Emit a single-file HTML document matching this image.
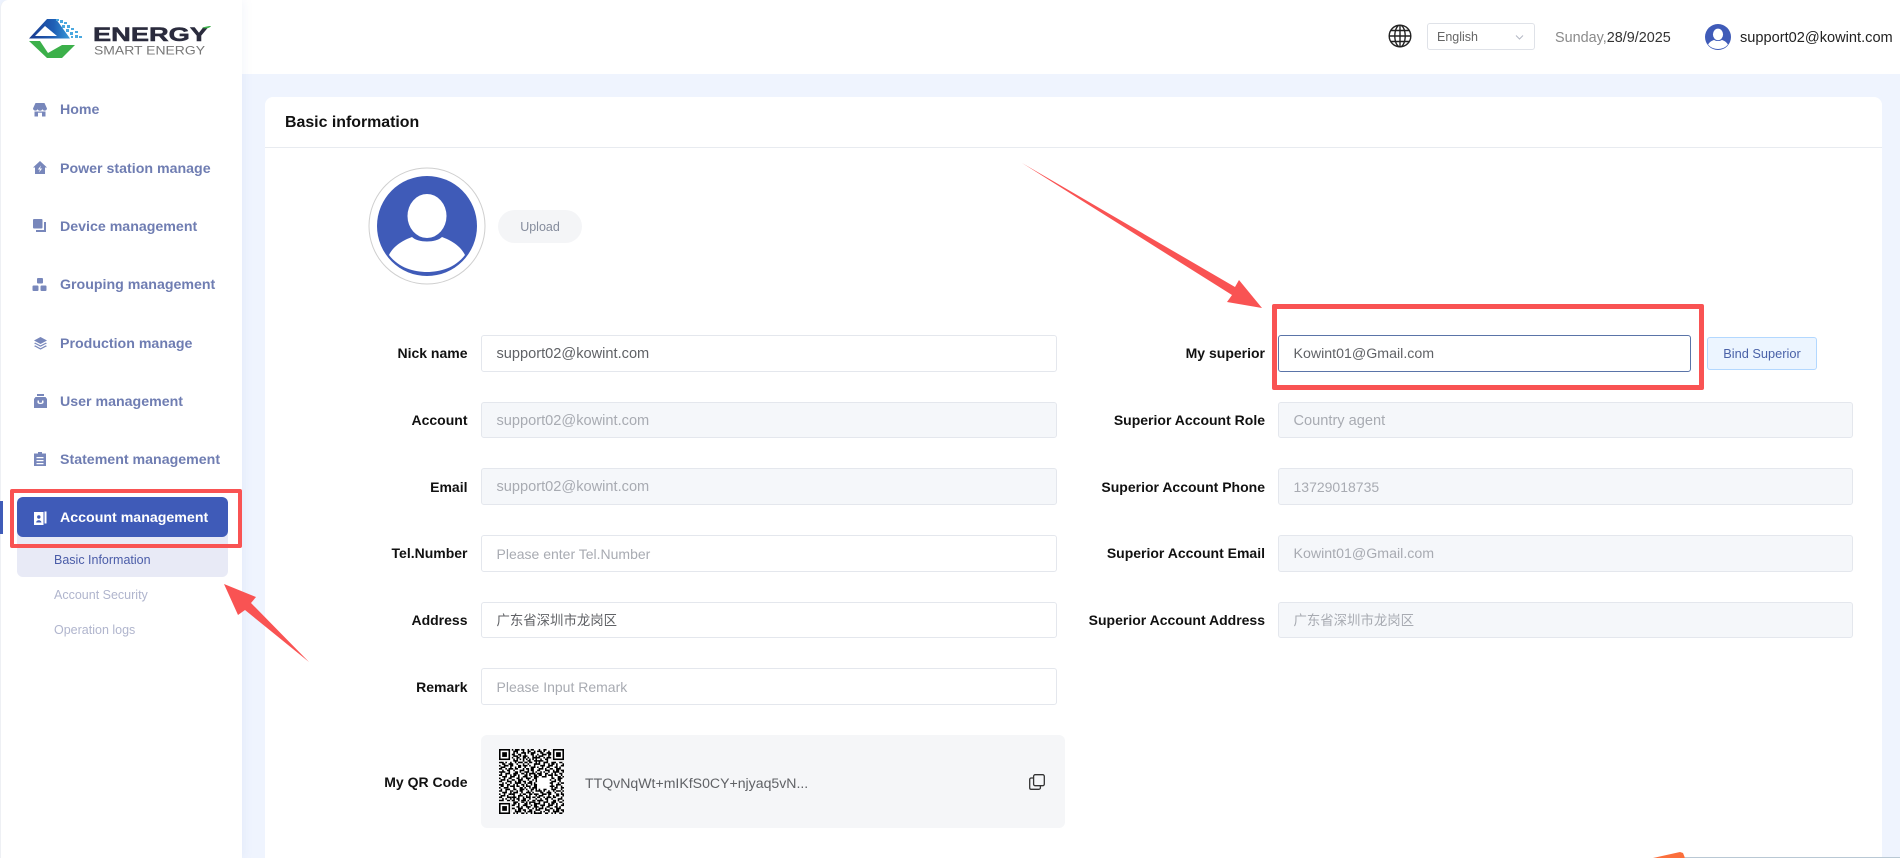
<!DOCTYPE html>
<html lang="en"><head><meta charset="utf-8"><title>Basic information</title>
<style>
*{box-sizing:border-box}
html,body{margin:0;padding:0}
body{width:1900px;height:858px;overflow:hidden;position:relative;background:#eff4fe;font-family:"Liberation Sans","Noto Sans CJK SC",sans-serif;color:#606266}
.a{position:absolute}
.side{left:0;top:0;width:242px;height:858px;background:#fff;border-left:1px solid #eef0f4;border-top-left-radius:8px;box-shadow:2px 0 10px rgba(120,140,200,.08)}
.head{left:242px;top:0;width:1658px;height:74px;background:#fff}
.panel{left:265px;top:97px;width:1617px;height:761px;background:#fff;border-radius:8px 8px 0 0}
.nav{left:60px;font-size:14.2px;font-weight:700;color:#6f7db2;line-height:18px;white-space:nowrap}
.sub{left:54px;font-size:12.5px;line-height:16px;color:#b0b5cd;white-space:nowrap}
.ic{fill:#7887bb}
.lb{font-size:14px;font-weight:700;color:#111;text-align:right;line-height:18px;white-space:nowrap}
.l1{left:300px;width:167.5px}
.l2{left:1000px;width:265px}
.in{height:37px;border:1px solid #e4e7ed;border-radius:3px;background:#fff;font-size:14.6px;line-height:37px;padding-left:14.5px;white-space:nowrap;color:#606266}
.c1{left:481px;width:576px}
.c2{left:1278px;width:575px}
.dis{background:#f5f7fa;color:#a8abb2}
.ph{color:#a8abb2;font-size:14px}
.zh{font-size:13.4px}
</style></head><body>
<div class="a head"></div>
<div class="a side"></div>

<!-- logo -->
<svg class="a" style="left:24px;top:14px" width="196" height="50" viewBox="24 14 196 50">
<defs><linearGradient id="rg" x1="0" x2="1" y1="0" y2="0"><stop offset="0" stop-color="#1a3a8e"/><stop offset=".6" stop-color="#1f5fb5"/><stop offset="1" stop-color="#3a9ad8"/></linearGradient></defs>
<path d="M29 38.5L47 19H56L70 38.5ZM35 36H57L45 26Z" fill="url(#rg)" fill-rule="evenodd"/>
<g fill="#4aa8e0"><rect x="56" y="19" width="3" height="2"/><rect x="60" y="20" width="3" height="3"/><rect x="64" y="22" width="3" height="2"/><rect x="62" y="25" width="3" height="3"/><rect x="67" y="25" width="3" height="3"/><rect x="71" y="28" width="3" height="2"/><rect x="66" y="29" width="3" height="3"/><rect x="70" y="32" width="3" height="3"/><rect x="75" y="31" width="3" height="2"/><rect x="75" y="35" width="3" height="3"/><rect x="79" y="36" width="3" height="2"/><rect x="71" y="36" width="2" height="2"/></g>
<path d="M29 41H40L48 53L62 45H75L62 58H47Z" fill="#3cb04a"/>
<text x="93" y="41" font-family="Liberation Sans" font-weight="700" font-size="19.5" fill="#2a2b3d" stroke="#2a2b3d" stroke-width=".5" textLength="115" lengthAdjust="spacingAndGlyphs">ENERGY</text>
<path d="M202 28c2-1 6-2 9-2-1 2-5 3-9 2z" fill="#3cb04a"/>
<text x="94" y="54.5" font-family="Liberation Sans" font-size="12" fill="#777" textLength="111" lengthAdjust="spacingAndGlyphs">SMART ENERGY</text>
</svg>

<!-- nav icons -->
<svg class="a" style="left:0;top:0" width="60" height="540" viewBox="0 0 60 540">
<g class="ic">
<path d="M35.5 103H44.5L47 108.5a2.4 2.4 0 0 1-4.6.6 2.6 2.6 0 0 1-4.8 0 2.4 2.4 0 0 1-4.6-.6Z"/>
<path d="M34.5 111.5H45.5V116.5H42V112.8H38V116.5H34.5Z"/>
<path d="M40 161L47 167.5H45V174H35V167.5H33ZM41 165.5L37.8 169.5H40L39 172.5L42.2 168.5H40Z" fill-rule="evenodd"/>
<rect x="33" y="219" width="9.5" height="9.5" rx="1"/>
<path d="M44 222H46V232H36V230H44Z"/>
<rect x="37" y="278" width="6" height="5.5" rx="1"/><rect x="32.5" y="285.5" width="6" height="5.5" rx="1"/><rect x="40.5" y="285.5" width="6" height="5.5" rx="1"/>
<path d="M40.5 337L47 340.5 40.5 344 34 340.5Z"/>
<path d="M35.2 342.6L40.5 345.4 45.8 342.6 47 343.3 40.5 346.8 34 343.3Z"/>
<path d="M35.2 345.4L40.5 348.2 45.8 345.4 47 346.1 40.5 349.6 34 346.1Z"/>
<path d="M37 394H44V396H37Z"/>
<path d="M35.5 397H45.5L47 399V408H34V399ZM37.5 400.5V402.5C37.5 404.5 43.5 404.5 43.5 402.5V400.5H42V402C42 403 39 403 39 402V400.5Z" fill-rule="evenodd"/>
<path d="M38 452H42V453.5H46V466H34V453.5H38ZM36.5 457V458.2H43.5V457ZM36.5 460V461.2H43.5V460ZM36.5 463V464.2H43.5V463Z" fill-rule="evenodd"/>
</g>
</svg>

<div class="a nav" style="top:101px">Home</div>
<div class="a nav" style="top:160px">Power station manage</div>
<div class="a nav" style="top:218px">Device management</div>
<div class="a nav" style="top:276px">Grouping management</div>
<div class="a nav" style="top:335px">Production manage</div>
<div class="a nav" style="top:393px">User management</div>
<div class="a nav" style="top:451px">Statement management</div>

<!-- active item -->
<div class="a" style="left:17px;top:525px;width:211px;height:52px;background:#e8eaf6;border-radius:0 0 6px 6px"></div>
<div class="a" style="left:0;top:501px;width:3px;height:33px;background:#3f5bb8"></div>
<div class="a" style="left:17px;top:497px;width:211px;height:40px;background:#3f5bb8;border-radius:6px"></div>
<svg class="a" style="left:34px;top:510px" width="13" height="16" viewBox="0 0 13 16"><path d="M0 2H9.5V15H0Z" fill="#fff"/><path d="M10.5 1.5H12.5V13.5H10.5Z" fill="#fff"/><circle cx="4.8" cy="7" r="1.7" fill="#3f5bb8"/><path d="M2.2 12.5c0-3 5.2-3 5.2 0Z" fill="#3f5bb8"/></svg>
<div class="a nav" style="top:509px;color:#fff">Account management</div>
<div class="a sub" style="top:552px;color:#4a5ca8">Basic Information</div>
<div class="a sub" style="top:587px">Account Security</div>
<div class="a sub" style="top:622px">Operation logs</div>

<!-- header right -->
<svg class="a" style="left:1388px;top:24px" width="24" height="24" viewBox="0 0 24 24" fill="none" stroke="#222" stroke-width="1.4"><circle cx="12" cy="12" r="10.8"/><ellipse cx="12" cy="12" rx="5.2" ry="10.8"/><path d="M12 1.2V22.8M1.2 12H22.8M3 6.5H21M3 17.5H21"/></svg>
<div class="a" style="left:1427px;top:23px;width:108px;height:27px;border:1px solid #dfe2e8;border-radius:3px;background:#fff;font-size:12.5px;line-height:27px;padding-left:9px;color:#666">English</div>
<svg class="a" style="left:1515px;top:34px" width="9" height="7" viewBox="0 0 9 7" fill="none" stroke="#b4b8c4" stroke-width="1"><path d="M1 1.5L4.5 5 8 1.5"/></svg>
<div class="a" style="left:1555px;top:29px;font-size:14.4px;line-height:18px;color:#8a8a8a;white-space:nowrap">Sunday,<span style="color:#333">28/9/2025</span></div>
<svg class="a" style="left:1705px;top:24px" width="26" height="26" viewBox="9 9 100 100">
<circle cx="59" cy="59" r="50" fill="#3f5bb8"/><ellipse cx="59" cy="49" rx="19.5" ry="22" fill="#fff"/><path d="M21 88C26 78 36 73 44 70 50 76 68 76 74 70 82 73 92 78 97 88 87 101 72 105 59 105 46 105 31 101 21 88Z" fill="#fff"/>
</svg>
<div class="a" style="left:1740px;top:28.5px;font-size:14.6px;line-height:18px;color:#222;white-space:nowrap">support02@kowint.com</div>

<!-- panel -->
<div class="a panel"></div>
<div class="a" style="left:285px;top:113px;font-size:15.9px;font-weight:700;color:#111;line-height:20px;white-space:nowrap">Basic information</div>
<div class="a" style="left:265px;top:147px;width:1617px;height:1px;background:#e8ebf0"></div>

<!-- avatar -->
<svg class="a" style="left:368px;top:167px" width="118" height="118" viewBox="0 0 118 118">
<circle cx="59" cy="59" r="58" fill="#fff" stroke="#cfcfcf" stroke-width="1"/>
<circle cx="59" cy="59" r="50" fill="#3f5bb8"/>
<ellipse cx="59" cy="49" rx="19.5" ry="22" fill="#fff"/>
<path d="M21 88C26 78 36 73 44 70 50 76 68 76 74 70 82 73 92 78 97 88 87 101 72 105 59 105 46 105 31 101 21 88Z" fill="#fff"/>
</svg>
<div class="a" style="left:498px;top:210px;width:84px;height:33px;border-radius:17px;background:#f4f5f7;color:#858c9c;font-size:12.5px;line-height:35px;text-align:center">Upload</div>

<!-- left form -->
<div class="a lb l1" style="top:344px">Nick name</div>
<div class="a in c1" style="top:335px">support02@kowint.com</div>
<div class="a lb l1" style="top:411px">Account</div>
<div class="a in c1 dis" style="top:402px;height:36px;line-height:36px">support02@kowint.com</div>
<div class="a lb l1" style="top:478px">Email</div>
<div class="a in c1 dis" style="top:468px">support02@kowint.com</div>
<div class="a lb l1" style="top:544px">Tel.Number</div>
<div class="a in c1 ph" style="top:535px">Please enter Tel.Number</div>
<div class="a lb l1" style="top:611px">Address</div>
<div class="a in c1 zh" style="top:602px;height:36px;line-height:35px">广东省深圳市龙岗区</div>
<div class="a lb l1" style="top:678px">Remark</div>
<div class="a in c1 ph" style="top:668px">Please Input Remark</div>

<!-- right form -->
<div class="a lb l2" style="top:344px">My superior</div>
<div class="a in" style="left:1278px;top:335px;width:413px;border-color:#5a74a8;border-radius:3px;font-size:14.2px">Kowint01@Gmail.com</div>
<div class="a" style="left:1707px;top:337px;width:110px;height:33px;background:#ecf5ff;border:1px solid #b3d8ff;border-radius:3px;color:#4a62a8;font-size:12.8px;line-height:31px;text-align:center;white-space:nowrap">Bind Superior</div>
<div class="a lb l2" style="top:411px">Superior Account Role</div>
<div class="a in c2 dis" style="top:402px;height:36px;line-height:36px">Country agent</div>
<div class="a lb l2" style="top:478px">Superior Account Phone</div>
<div class="a in c2 dis" style="top:468px;font-size:14px">13729018735</div>
<div class="a lb l2" style="top:544px">Superior Account Email</div>
<div class="a in c2 dis" style="top:535px;font-size:14.2px">Kowint01@Gmail.com</div>
<div class="a lb l2" style="top:611px">Superior Account Address</div>
<div class="a in c2 dis zh" style="top:602px;height:36px;line-height:35px">广东省深圳市龙岗区</div>

<!-- QR -->
<div class="a lb l1" style="top:773px">My QR Code</div>
<div class="a" style="left:481px;top:735px;width:584px;height:93px;background:#f5f6f8;border-radius:6px"></div>
<svg class="a" style="left:499px;top:749px" width="65" height="65" viewBox="0 0 41 41">
<defs>
<path id="q" stroke="#000" stroke-width="1" fill="none" d="M0 .5h2m1 0h3m2 0h1m1 0h3m1 0h2m2 0h1m1 0h2m2 0h3M2 1.5h1m2 0h2m2 0h3m3 0h1m2 0h2m2 0h1m2 0h2m2 0h2M9 2.5h1m1 0h1m2 0h3m1 0h1m1 0h3m1 0h1M8 3.5h2m2 0h2m2 0h1m3 0h2m2 0h2M9 4.5h3m1 0h1m1 0h3m3 0h1m1 0h1M8 5.5h1m2 0h2m2 0h2m1 0h1m2 0h3M9 6.5h1m1 0h1m1 0h1m1 0h1m1 0h1m1 0h1m1 0h1m1 0h1M1 7.5h1m2 0h2m3 0h3m3 0h1m2 0h2m2 0h2m2 0h2m2 0h1M0 8.5h3m1 0h1m2 0h1m2 0h1m1 0h3m1 0h2m1 0h2m2 0h1m1 0h2m1 0h2M2 9.5h2m2 0h3m2 0h1m3 0h1m2 0h1m3 0h3m1 0h3M0 10.5h1m2 0h3m1 0h2m3 0h2m1 0h3m1 0h1m2 0h1m2 0h1m2 0h2M1 11.5h3m3 0h1m2 0h1m1 0h2m2 0h1m3 0h3m1 0h1m1 0h3M0 12.5h2m2 0h1m1 0h3m1 0h2m3 0h1m1 0h2m1 0h2m3 0h2m1 0h1M2 13.5h1m2 0h2m2 0h1m3 0h3m2 0h1m1 0h2m2 0h3m2 0h1M0 14.5h4m2 0h1m3 0h2m1 0h1m2 0h3m2 0h1m1 0h1m2 0h3M1 15.5h1m2 0h3m2 0h3m2 0h2m1 0h1m1 0h4m3 0h2M0 16.5h2m2 0h1m2 0h1m1 0h2m1 0h1m3 0h2m1 0h1m2 0h2m1 0h3M2 17.5h3m2 0h3m2 0h1m2 0h3m2 0h1m1 0h2m1 0h1m2 0h1M0 18.5h1m2 0h1m2 0h2m3 0h2m1 0h1m2 0h3m2 0h3m1 0h2M1 19.5h3m1 0h1m2 0h2m2 0h3m3 0h1m2 0h1m1 0h1m2 0h2M0 20.5h2m3 0h3m2 0h1m1 0h2m1 0h2m2 0h2m2 0h3m1 0h1M2 21.5h1m1 0h1m2 0h1m2 0h4m2 0h1m1 0h3m1 0h1m3 0h2M0 22.5h3m2 0h2m2 0h1m1 0h1m2 0h2m1 0h1m2 0h1m1 0h3m1 0h2M1 23.5h2m2 0h1m1 0h3m1 0h2m2 0h1m1 0h3m2 0h2m2 0h3M0 24.5h1m2 0h3m3 0h1m3 0h2m1 0h1m2 0h1m1 0h3m1 0h2M9 25.5h2m2 0h3m1 0h1m2 0h2m1 0h2m1 0h1m2 0h2M8 26.5h1m2 0h1m1 0h2m3 0h1m1 0h1m2 0h3m1 0h2M9 27.5h3m2 0h1m2 0h3m1 0h1m2 0h1m1 0h3M8 28.5h2m3 0h1m1 0h2m2 0h2m1 0h3m2 0h2M9 29.5h1m2 0h3m2 0h1m1 0h1m3 0h2m1 0h3M8 30.5h3m1 0h1m2 0h1m1 0h3m1 0h2m2 0h3M9 31.5h1m1 0h2m2 0h2m2 0h1m3 0h1m1 0h2m1 0h1M8 32.5h2m2 0h1m1 0h3m1 0h1m2 0h2m1 0h2m2 0h1"/>
<clipPath id="c1"><rect x="0" y="0" width="24" height="33"/></clipPath>
<clipPath id="c2"><rect x="24" y="0" width="17" height="25"/></clipPath>
<clipPath id="c3"><rect x="24" y="25" width="17" height="16"/></clipPath>
<clipPath id="c4"><rect x="0" y="33" width="24" height="8"/></clipPath>
<clipPath id="c5"><rect x="0" y="25" width="8" height="8"/></clipPath>
</defs>
<rect width="41" height="41" fill="#fff"/>
<g clip-path="url(#c1)"><use href="#q"/></g>
<g clip-path="url(#c5)"><rect x="0" y="25" width="8" height="8" fill="#fff"/><use href="#q" x="0" y="10"/></g>
<g clip-path="url(#c2)"><use href="#q" x="24" y="-7"/></g>
<g clip-path="url(#c3)"><use href="#q" x="24" y="18"/></g>
<g clip-path="url(#c4)"><use href="#q" x="0" y="18"/></g>
<g fill="#fff"><rect width="8" height="8"/><rect x="33" width="8" height="8"/><rect y="33" width="8" height="8"/></g>
<g fill="none" stroke="#000"><rect x=".5" y=".5" width="6" height="6"/><rect x="34.5" y=".5" width="6" height="6"/><rect x=".5" y="34.5" width="6" height="6"/></g>
<g fill="#000"><rect x="2" y="2" width="3" height="3"/><rect x="36" y="2" width="3" height="3"/><rect x="2" y="36" width="3" height="3"/></g>
</svg>
<div class="a" style="left:585px;top:773px;font-size:14.1px;line-height:20px;color:#606266;white-space:nowrap">TTQvNqWt+mIKfS0CY+njyaq5vN...</div>
<svg class="a" style="left:1029px;top:774px" width="16" height="16" viewBox="0 0 16 16" fill="none" stroke="#333" stroke-width="1.3"><rect x="4.6" y=".7" width="10.7" height="11" rx="1.6"/><path d="M4.6 4H2.2C1.3 4 .7 4.7.7 5.6V13.7C.7 14.6 1.3 15.3 2.2 15.3H9.8C10.7 15.3 11.4 14.6 11.4 13.7V11.7"/></svg>

<!-- annotations -->
<div class="a" style="left:10px;top:489px;width:232px;height:59px;border:4px solid #f95353;border-radius:2px"></div>
<div class="a" style="left:1272px;top:304px;width:432px;height:86px;border:5px solid #f95353;border-radius:2px"></div>
<svg class="a" style="left:0;top:0;pointer-events:none" width="1900" height="858" viewBox="0 0 1900 858">
<polygon points="1022,163 1235,287 1239,280 1262,308 1227,302 1232,295" fill="#f95353"/>
<polygon points="224,584 256,597 251,603 309,662 245,610 238,615" fill="#f95353"/>
<polygon points="1653,858 1680,852 1683,853 1685,858" fill="#fb6f3c"/>
<rect x="1685" y="857" width="215" height="1" fill="#b9c8d4"/>
</svg>
</body></html>
